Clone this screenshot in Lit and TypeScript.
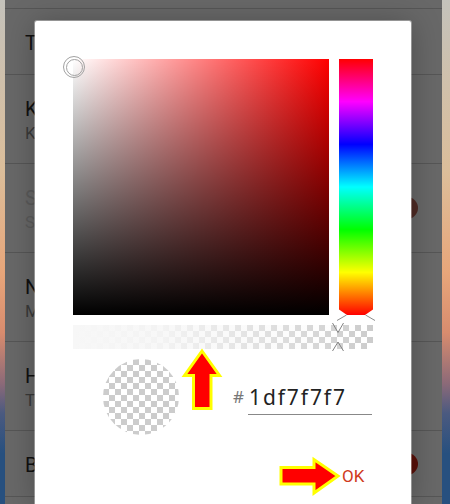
import { LitElement, html, css } from "lit";
import { customElement } from "lit/decorators.js";

const rows: [string, string, boolean, boolean, boolean][] = [
  ["Theme", "", false, false, true],
  ["Keep screen on", "Keep the display awake", false, false, false],
  ["Show clock", "Show time on screen", true, true, false],
  ["Notifications", "Manage alerts", false, false, false],
  ["Haptics", "Touch vibration", false, false, false],
  ["Background color", "", false, true, true],
  ["", "", false, false, true],
];

@customElement("app-root")
export class AppRoot extends LitElement {
  static styles = css`
    :host { display: block; width: 450px; height: 504px; overflow: hidden; position: relative; font-family: Roboto, "Liberation Sans", sans-serif; }
    .wall { display: flex; height: 504px; padding: 0 8px 0 5px; box-sizing: border-box;
      background: linear-gradient(180deg, #c4c2bb 0%, #dcbe9a 34%, #e8a67a 54%, #d88c6e 66%, #8d6a78 76%, #4b5a80 82%, #27507f 90%, #27507f 100%); }
    .panel { flex: 1; background: #686868; padding-top: 8px; box-sizing: border-box; overflow: hidden; }
    .row { height: 89px; border-top: 1px solid #565656; box-sizing: border-box; padding: 22px 20px 0; position: relative; color: #111; }
    .row.short { height: 66px; }
    .t { font-size: 20px; line-height: 24px; }
    .s { font-size: 17px; line-height: 24px; color: #3a3a3a; }
    .row.dim .t, .row.dim .s { color: #5a5a5a; }
    .dot { position: absolute; right: 24px; top: 33px; width: 22px; height: 22px; border-radius: 50%; background: #4e2a24; }
    .row.short .dot { top: 22px; }
    .dot.strong { background: #5a0f08; }
    .dialog { position: absolute; left: 35px; top: 21px; width: 376px; height: 483px; background: #fff; border-radius: 2px 2px 0 0; box-sizing: border-box; padding: 38px 38px 0; box-shadow: 0 0 0 1px rgba(255,255,255,.35), 0 2px 30px rgba(0,0,0,.28); }
    .picker { display: flex; gap: 10px; }
    .sat { position: relative; width: 256px; height: 256px; background: linear-gradient(180deg, rgba(0,0,0,0), #000), linear-gradient(90deg, #fff, #f00); }
    .ring { position: absolute; left: -10px; top: -3px; width: 22px; height: 22px; border-radius: 50%; border: 1.2px solid #a2a2a2; box-sizing: border-box; }
    .ring::after { content: ""; position: absolute; inset: 1.5px; border: 1.2px solid #a2a2a2; border-radius: 50%; }
    .hue { width: 34px; height: 256px; position: relative; background: linear-gradient(180deg, #f00 0%, #f0f 16.66%, #00f 33.33%, #0ff 50%, #0f0 66.66%, #ff0 83.33%, #f00 100%); }
    .hue svg { position: absolute; left: -2px; bottom: -6px; }
    .alpha { position: relative; margin-top: 10px; width: 300px; height: 24px; background-color: #fff; background-image: conic-gradient(#ccc 25%, #fff 0 50%, #ccc 0 75%, #fff 0); background-size: 12px 12px; }
    .alpha::before { content: ""; position: absolute; inset: 0; background: linear-gradient(90deg, #f7f7f7 0%, rgba(247,247,247,.9) 30%, rgba(247,247,247,0) 100%); }
    .alpha svg { position: absolute; left: 258px; top: -2px; }
    .lower { display: flex; align-items: center; margin-top: 10px; padding-left: 30px; }
    .swatch { flex: none; width: 76px; height: 76px; border-radius: 50%; background-color: #fff; background-image: conic-gradient(#ccc 25%, #fff 0 50%, #ccc 0 75%, #fff 0); background-size: 12px 12px; }
    .hex { margin-left: 69px; display: flex; align-items: baseline; position: relative; top: 2px; }
    .hash { position: absolute; left: -15px; bottom: 7px; font-size: 17px; line-height: 22px; font-family: "Noto Sans", sans-serif; color: #777; }
    .input { width: 124px; height: 32px; border-bottom: 1.5px solid #888; box-sizing: border-box; padding-left: 1px; font-family: "Noto Sans", sans-serif; font-size: 21px; line-height: 28px; letter-spacing: 1.9px; color: #222; }
    .ok { position: absolute; left: 307px; top: 443px; font-size: 17px; line-height: 24px; color: #d03a20; font-family: Roboto, sans-serif; }
    .arrow { position: absolute; left: 0; top: 0; pointer-events: none; }
  `;

  render() {
    return html`
      <div class="wall">
        <div class="panel">
          ${rows.map(([t, s, dim, dot, short]) => html`
            <div class="row ${short ? "short" : ""} ${dim ? "dim" : ""}">
              ${t ? html`<div class="t">${t}</div>` : ""}
              ${s ? html`<div class="s">${s}</div>` : ""}
              ${dot ? html`<span class="dot ${dim ? "" : "strong"}"></span>` : ""}
            </div>`)}
        </div>
      </div>
      <div class="dialog">
        <div class="picker">
          <div class="sat"><span class="ring"></span></div>
          <div class="hue">
            <svg width="38" height="12" viewBox="0 0 38 12" fill="none">
              <path d="M2 0.5 L2 6 L10 6 Z M36 0.5 L36 6 L28 6 Z" fill="#fff"/>
              <path d="M0 11.5 L9.5 6 M38 11.5 L28.5 6" stroke="#8c8c8c" stroke-width="1"/>
            </svg>
          </div>
        </div>
        <div class="alpha">
          <svg width="16" height="28" viewBox="0 0 16 28" fill="none">
            <path d="M1.5 0 L7 9.5 L12.5 0 M1.5 28 L7 19 L12.5 28" stroke="#808080" stroke-width="1"/>
          </svg>
        </div>
        <div class="lower">
          <div class="swatch"></div>
          <div class="hex"><span class="hash">#</span><div class="input">1df7f7f7</div></div>
        </div>
        <div class="ok">OK</div>
      </div>
      <svg class="arrow" width="450" height="504" viewBox="0 0 450 504">
        <path d="M202 351 L219.5 375.5 L211 375.5 L211 408.5 L193.5 408.5 L193.5 375.5 L184.5 375.5 Z" fill="#f00" stroke="#ff0" stroke-width="3" stroke-miterlimit="10"/>
        <path d="M338 476 L314 459.5 L314 467.5 L281 467.5 L281 484 L314 484 L314 493 Z" fill="#f00" stroke="#ff0" stroke-width="3" stroke-miterlimit="10"/>
      </svg>
    `;
  }
}
